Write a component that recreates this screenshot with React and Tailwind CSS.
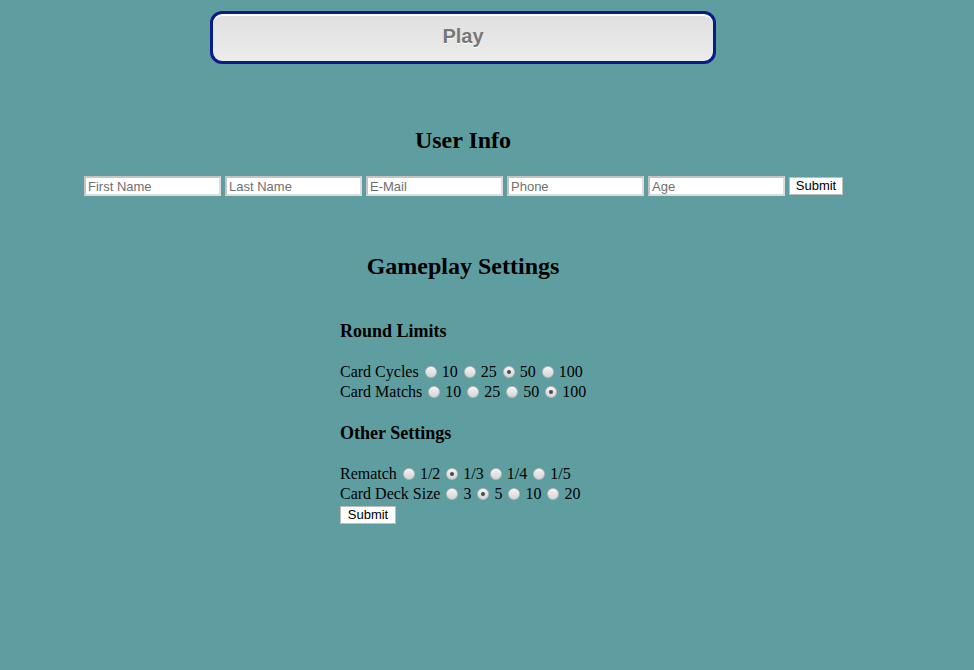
import React from 'react'

const serif = "font-['Liberation_Serif','Times_New_Roman',serif]"
const sans = "font-['Liberation_Sans',Arial,sans-serif]"

function Radio({ checked }) {
  return (
    <span className="inline-flex h-[12px] w-[12px] shrink-0 items-center justify-center rounded-full border border-[#b9b9b9] bg-linear-to-b from-[#f2f2f2] to-[#d6d6d6] shadow-[inset_0_1px_0_#fff]">
      {checked && <span className="h-[4px] w-[4px] rounded-full bg-[#4a4a4a]" />}
    </span>
  )
}

function RadioRow({ label, options, selected }) {
  return (
    <div className="flex h-[20px] items-center text-[16px] leading-[20px] text-black">
      <span>{label}</span>
      {options.map((o) => (
        <span key={o} className="flex items-center">
          <span className="ml-[6px] mr-[5px] flex items-center">
            <Radio checked={o === selected} />
          </span>
          <span>{o}</span>
        </span>
      ))}
    </div>
  )
}

function TextInput({ placeholder }) {
  return (
    <input
      placeholder={placeholder}
      className={`h-[20px] w-[137px] border-2 border-t-[#c4c4c4] border-l-[#c4c4c4] border-b-[#dcdcdc] border-r-[#dcdcdc] bg-white px-[2px] text-[13px] leading-[16px] text-black placeholder:text-[#6f6f6f] outline-none ${sans}`}
    />
  )
}

export default function App() {
  return (
    <div className={`min-h-screen w-full bg-[#5f9ea0] ${serif}`}>
      <div className="w-[926px] pt-[11px]">
        {/* big play button */}
        <div className="flex justify-center">
          <button
            className={`flex h-[53px] w-[506px] items-center justify-center rounded-[12px] border-[3px] border-[#0a1c8a] bg-linear-to-b from-[#dfdfdf] to-[#ececec] pb-[4px] shadow-[inset_0_2px_0_#fff] ${sans}`}
          >
            <span className="text-[20px] font-bold text-[#777] [text-shadow:0_1px_0_#fff]">Play</span>
          </button>
        </div>

        <h2 className="mt-[62px] text-center text-[24px] font-bold leading-[28px] text-black">User Info</h2>

        <div className="mt-[22px] flex justify-center gap-[4px] pl-[1px]">
          <TextInput placeholder="First Name" />
          <TextInput placeholder="Last Name" />
          <TextInput placeholder="E-Mail" />
          <TextInput placeholder="Phone" />
          <TextInput placeholder="Age" />
          <div className="flex items-center">
            <button
              className={`h-[18px] w-[54px] border border-[#bdbdbd] bg-white text-[13px] leading-[16px] text-black ${sans}`}
            >
              Submit
            </button>
          </div>
        </div>

        <h2 className="mt-[56px] text-center text-[24px] font-bold leading-[28px] text-black">
          Gameplay Settings
        </h2>

        <div className="pl-[340px]">
          <h3 className="mt-[40px] text-[18px] font-bold leading-[22px] text-black">Round Limits</h3>
          <div className="mt-[20px]">
            <RadioRow label="Card Cycles" options={['10', '25', '50', '100']} selected="50" />
            <RadioRow label="Card Matchs" options={['10', '25', '50', '100']} selected="100" />
          </div>

          <h3 className="mt-[20px] text-[18px] font-bold leading-[22px] text-black">Other Settings</h3>
          <div className="mt-[20px]">
            <RadioRow label="Rematch" options={['1/2', '1/3', '1/4', '1/5']} selected="1/3" />
            <RadioRow label="Card Deck Size" options={['3', '5', '10', '20']} selected="5" />
          </div>
          <div className="mt-[2px] flex">
            <button
              className={`h-[18px] w-[56px] border border-[#bdbdbd] bg-white text-[13px] leading-[16px] text-black ${sans}`}
            >
              Submit
            </button>
          </div>
        </div>
      </div>
    </div>
  )
}
